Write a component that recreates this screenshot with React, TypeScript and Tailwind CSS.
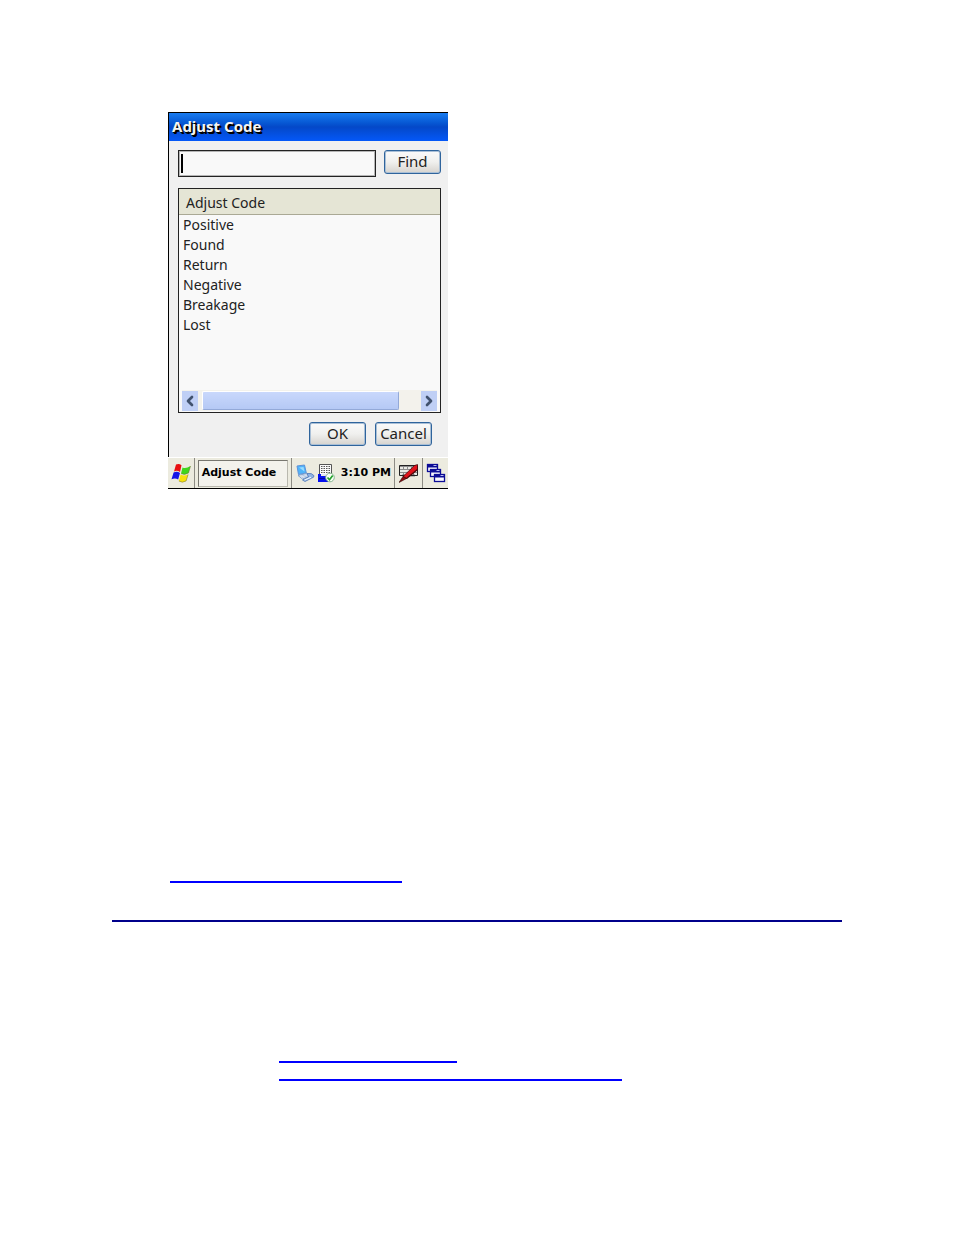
import { useState } from "react";
import type { ReactNode } from "react";
import { ChevronLeft, ChevronRight } from "lucide-react";

const CODES = ["Positive", "Found", "Return", "Negative", "Breakage", "Lost"];

const DialogButton = ({ children }: { children: ReactNode }) => (
  <button
    type="button"
    className="flex h-6 w-[57px] shrink-0 items-center justify-center rounded-[3px] border border-[#2f649c] bg-linear-to-b from-[#fafafa] via-[#f0f0ee] to-[#d6d3ce] pb-0.5 text-[15px] leading-5 text-[#222] shadow-[inset_0_0_0_1px_#a9bfd6]"
  >
    {children}
  </button>
);

const Divider = () => <span className="w-px self-stretch bg-[#8d8c84]" />;

const StartIcon = () => (
  <svg viewBox="0 0 20 20" className="size-5" aria-hidden="true">
    <path d="M5 1.500q3-1.500 5.500.8L9 9Q6 7 3 8.500z" fill="#e81010" />
    <path d="M11.500 4.500q3.500 1.500 8-1.500l-2 7q-4 2.500-7.500.6z" fill="#3fd61c" />
    <path d="M2.600 9.500q3.400-1.500 6.400.5l-1.800 6.500q-3-1.800-6.700-.3z" fill="#1414e8" />
    <path d="M9.600 11.500q3.400 2 7.500 0l-2 6.500q-4 2.300-7.300 0z" fill="#f7e20c" />
    <path d="M7.800 18q3.300 2.300 7.300 0l2-6.500M10 10.600q3.500 1.900 7.500-.6l2-7" fill="none" stroke="#6b6a2a" strokeWidth=".5" />
  </svg>
);

const ComputerIcon = () => (
  <svg viewBox="0 0 20 20" className="size-5" aria-hidden="true">
    <path d="M2 3 9.500 2l1.800 8L3.500 11.500z" fill="#4fb4fa" stroke="#5f92d8" />
    <path d="m4 4.500 4.500-.5 1 4.500z" fill="#9bdcff" />
    <path d="m3 12.500 8-2 4.500 2.300L7.500 16z" fill="#eef3fa" stroke="#7f9fca" />
    <path d="m5.500 13.300 6-1.600M7 14.500l6-1.800" stroke="#9db6d8" strokeWidth=".7" />
    <path d="M12 10.500q5-.8 7 2.200.3 1.800-2.500 2.500L10 18.500 7.500 17l6-3z" fill="#8fb4e6" stroke="#4f77b5" strokeWidth=".8" />
    <path d="m9.500 17 6.500-2.800" stroke="#f1f7ff" strokeWidth="1.200" />
  </svg>
);

const KeypadIcon = () => (
  <svg viewBox="0 0 20 20" className="size-5" aria-hidden="true">
    <path d="M4.500 1.500h12v10h-12z" fill="#fafafa" stroke="#555" />
    <path d="M6 3.500h10M6 5.500h10M6 7.500h10M6 9.500h10" stroke="#555" strokeDasharray="1.500 1" strokeWidth="1.200" />
    <path d="M3 11h3v2h7v6H3z" fill="#0510ee" />
    <path d="M6 11.500h7" stroke="#dfe3ff" />
    <path d="M4 15.500h6" stroke="#0206a8" />
    <circle cx="15" cy="14.500" r="4.300" fill="#f7fff5" stroke="#7dae88" strokeWidth=".9" />
    <path d="m12.500 14.500 2 2.200 3.200-4.200" fill="none" stroke="#24a02c" strokeWidth="1.700" />
  </svg>
);

const PenIcon = () => (
  <svg viewBox="0 0 20 20" className="size-5" aria-hidden="true">
    <path d="M.5 2.500h18v10H.5z" fill="#e9e9e4" stroke="#222" />
    <path d="M1 3.500h17M1 6.500h17M1 9.500h17" stroke="#8c8c8c" />
    <path d="M4.500 3v3M8.500 3v3M12.500 3v3M4.500 9v3M14.500 9v3" stroke="#8c8c8c" />
    <path d="M3 12.500h13" stroke="#222" strokeWidth="1.500" />
    <path d="M15.500 2.500 18.500 1.500v5L7.500 15.500 4 13.500z" fill="#e0121a" stroke="#3a0909" strokeWidth=".7" />
    <path d="M18.500 6.500 7.500 15.500" stroke="#55080b" strokeWidth="1.300" />
    <path d="m0 19.500 4-6 3.500 2z" fill="#8f0a10" stroke="#2a0404" strokeWidth=".6" />
  </svg>
);

const WindowsIcon = () => (
  <svg viewBox="0 0 20 20" className="size-5" aria-hidden="true">
    {[
      [1.5, 1.5],
      [4.5, 6.5],
      [8.5, 11.5],
    ].map(([x, y]) => (
      <g key={x}>
        <rect x={x} y={y} width="10" height="7" fill="#f8f8ff" stroke="#0c0c96" strokeWidth="1.300" />
        <rect x={x} y={y} width="10" height="3" fill="#0c0c96" />
        <path d={`M${x + 6} ${y + 1}h3`} stroke="#b9bdf2" />
      </g>
    ))}
  </svg>
);

const Taskbar = () => (
  <footer className="flex h-[31px] items-center border-t border-white bg-[#ecebdf] text-black">
    <button type="button" aria-label="Start" className="flex w-[26px] justify-center">
      <StartIcon />
    </button>
    <Divider />
    <button
      type="button"
      className="mx-[3px] h-[27px] w-[90px] shrink-0 border border-[#77766f] border-r-[#b9b8ae] border-b-[#b9b8ae] bg-[#f3f2ec] pr-2 font-['DejaVu_Sans'] text-[11px] font-bold whitespace-nowrap"
    >
      Adjust Code
    </button>
    <Divider />
    <div className="flex flex-1 items-center justify-between px-[3px]">
      <div className="flex">
        <ComputerIcon />
        <KeypadIcon />
      </div>
      <time className="font-['DejaVu_Sans'] text-[11px] font-bold whitespace-nowrap">3:10 PM</time>
    </div>
    <Divider />
    <button type="button" aria-label="Input panel" className="flex w-[27px] justify-center">
      <PenIcon />
    </button>
    <Divider />
    <button type="button" aria-label="Switch windows" className="flex w-[25px] justify-center">
      <WindowsIcon />
    </button>
  </footer>
);

const HorizontalScrollbar = () => (
  <div className="mx-[3px] mb-px flex h-[21px] items-center bg-[#f3f2ec]">
    <button type="button" aria-label="Scroll left" className="flex h-5 w-4 items-center justify-center bg-[#bfcff5] text-[#41526e]">
      <ChevronLeft size={16} strokeWidth={4} />
    </button>
    <div className="flex h-full flex-1 px-1 py-px">
      <div className="w-11/12 rounded-[2px] border border-white border-r-[#93a9d8] border-b-[#93a9d8] bg-linear-to-b from-[#c9d8fc] to-[#b5c9f5]" />
    </div>
    <button type="button" aria-label="Scroll right" className="flex h-5 w-4 items-center justify-center bg-[#bfcff5] text-[#41526e]">
      <ChevronRight size={16} strokeWidth={4} />
    </button>
  </div>
);

const AdjustCodeScreen = () => {
  const [query, setQuery] = useState("");

  return (
    <section className="w-[280px] border-y border-black bg-[#f0f0f0] font-['Noto_Sans',sans-serif] text-[#222]">
      <div className="border-l border-black">
        <h1 className="flex h-7 items-center bg-linear-to-b from-[#1a7cf0] via-[#0448c8] to-[#0458f8] px-[3px] pb-0.5 text-[15px] font-bold text-[#f4f4f4] [text-shadow:1px_1px_0_#000,2px_2px_0_#000]">
          Adjust Code
        </h1>
        <div className="pt-[9px] pr-[7px] pb-[11px] pl-[9px]">
          <form className="flex items-start justify-between" onSubmit={(e) => e.preventDefault()}>
            <div className="relative">
              <input
                type="text"
                aria-label="Adjust code"
                value={query}
                onChange={(e) => setQuery(e.target.value)}
                className="block h-[27px] w-[198px] border border-[#222] bg-[#f9f9f9] px-1 text-sm shadow-[inset_0_0_0_1px_#b5b5b5] outline-none"
              />
              {!query && <span className="pointer-events-none absolute top-1 left-[3px] h-[19px] w-0.5 bg-black" />}
            </div>
            <DialogButton>Find</DialogButton>
          </form>

          <div className="mt-[11px] flex h-[225px] flex-col border border-[#222] bg-[#f9f9f9]">
            <table className="w-full text-left text-sm leading-5">
              <thead>
                <tr>
                  <th className="h-[25px] border-b border-[#aaa995] bg-[#e5e5d5] px-[7px] pt-1 font-normal">Adjust Code</th>
                </tr>
              </thead>
              <tbody>
                {CODES.map((code) => (
                  <tr key={code}>
                    <td className="h-5 px-1">{code}</td>
                  </tr>
                ))}
              </tbody>
            </table>
            <div className="mt-auto">
              <HorizontalScrollbar />
            </div>
          </div>

          <div className="mt-[9px] flex justify-end gap-[9px] pr-[9px]">
            <DialogButton>OK</DialogButton>
            <DialogButton>Cancel</DialogButton>
          </div>
        </div>
      </div>
      <Taskbar />
    </section>
  );
};

const App = () => (
  <main className="min-h-screen bg-white px-28 pt-28 pb-[154px]">
    <div className="pl-14">
      <AdjustCodeScreen />
    </div>
    <nav aria-label="Related topic" className="mt-[392px] pl-[58px]">
      <a href="#codes" aria-label="Adjust codes" className="block h-0.5 w-[232px] bg-[#0000ff]" />
    </nav>
    <hr className="mt-[37px] border-t-2 border-[#00008b]" />
    <nav aria-label="See also" className="mt-[139px] flex flex-col gap-4 pl-[167px]">
      <a href="#find" aria-label="Find a code" className="block h-0.5 w-[178px] bg-[#0000ff]" />
      <a href="#list" aria-label="List of adjust codes" className="block h-0.5 w-[343px] bg-[#0000ff]" />
    </nav>
  </main>
);

export default App;
